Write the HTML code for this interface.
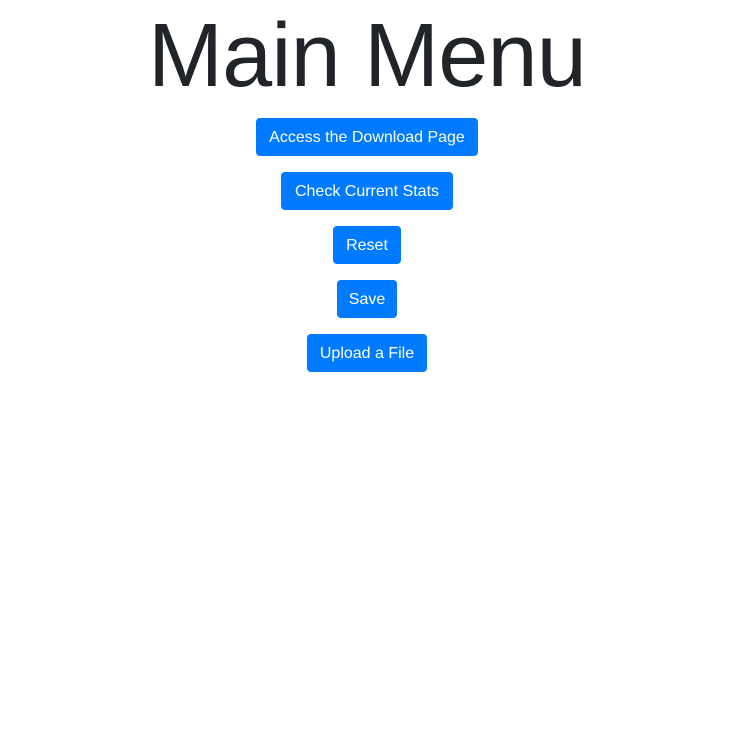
<!DOCTYPE html>
<html><head><meta charset="utf-8"><style>
body{margin:0;width:744px;height:753px;background:#fff;font-family:"Liberation Sans",Arial,sans-serif;}
.w{width:734px;}
h1{margin:0;height:115px;line-height:112px;font-size:90px;font-weight:300;color:#212529;text-align:center;letter-spacing:-0.8px;}
.b{display:block;margin:0 auto 16px;height:38px;line-height:40px;background:#007bff;color:#fff;border-radius:4px;font-size:16px;text-align:center;box-sizing:border-box;}
</style></head><body><div class="w">
<h1>Main Menu</h1>
<div style="height:3px"></div>
<div class="b" style="width:222px">Access the Download Page</div>
<div class="b" style="width:172px">Check Current Stats</div>
<div class="b" style="width:68px">Reset</div>
<div class="b" style="width:60px">Save</div>
<div class="b" style="width:120px">Upload a File</div>
</div></body></html>
